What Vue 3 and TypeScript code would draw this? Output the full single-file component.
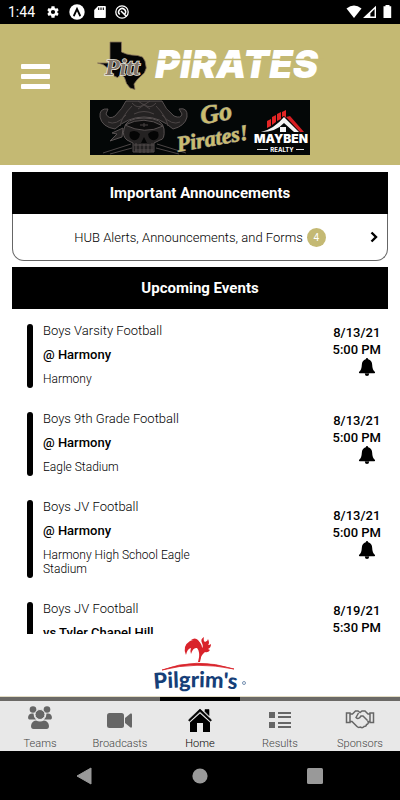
<script setup lang="ts">
import { ref } from 'vue'

interface GameEvent {
  id: number
  team: string
  opponent: string
  place: string
  date: string
  time: string
}

const events: GameEvent[] = [
  { id: 1, team: 'Boys Varsity Football', opponent: '@ Harmony', place: 'Harmony', date: '8/13/21', time: '5:00 PM' },
  { id: 2, team: 'Boys 9th Grade Football', opponent: '@ Harmony', place: 'Eagle Stadium', date: '8/13/21', time: '5:00 PM' },
  { id: 3, team: 'Boys JV Football', opponent: '@ Harmony', place: 'Harmony High School Eagle Stadium', date: '8/13/21', time: '5:00 PM' },
  { id: 4, team: 'Boys JV Football', opponent: 'vs Tyler Chapel Hill', place: '', date: '8/19/21', time: '5:30 PM' },
]

const tabs = ['Teams', 'Broadcasts', 'Home', 'Results', 'Sponsors']
const active = ref('Home')
const alertCount = ref(4)
</script>

<template>
  <div class="app">
    <div class="status">
      <span class="clock">1:44</span>
      <svg class="status-icon" width="14" height="14" viewBox="0 0 24 24" aria-hidden="true">
        <path fill="#fff" d="M19.4 13a7.500 7.500 0 0 0 0-2l2.300-1.800-2.200-4-2.700 1.100a8 8 0 0 0-1.800-1L14.600 2.300H9.400L9 5.300a8 8 0 0 0-1.800 1L4.500 5.200l-2.200 4L4.600 11a7.500 7.500 0 0 0 0 2l-2.300 1.800 2.200 4 2.700-1.100a8 8 0 0 0 1.800 1l.4 3h5.200l.4-3a8 8 0 0 0 1.800-1l2.700 1.100 2.200-4zM12 15.600a3.600 3.600 0 1 1 0-7.200 3.600 3.600 0 0 1 0 7.200z" />
      </svg>
      <svg class="status-icon" width="16" height="16" viewBox="0 0 16 16" aria-hidden="true">
        <circle cx="8" cy="8" r="7.700" fill="#fff" />
        <path d="M5 11.500 8 5l3 6.500" fill="none" stroke="#000" stroke-width="1.800" stroke-linecap="round" />
      </svg>
      <svg class="status-icon" width="12" height="14" viewBox="0 0 12 14" aria-hidden="true">
        <path d="M4 1h7q.8 0 .8.8v10.400q0 .8-.8.8H1q-.8 0-.8-.8V5z" fill="#fff" />
        <path d="M4.700 2.500v2.500M7 2.500v2.500M9.300 2.500v2.500" stroke="#000" stroke-width="1.100" />
      </svg>
      <svg class="status-icon" width="14" height="14" viewBox="0 0 14 14" aria-hidden="true">
        <circle cx="7" cy="7" r="6.200" fill="none" stroke="#fff" stroke-width="1.300" />
        <path d="M4.800 9.500a3.400 3.400 0 1 1 4.900-.3M6 6l5.500 5.500" fill="none" stroke="#fff" stroke-width="1.500" />
      </svg>
      <svg class="signals" width="46" height="14" viewBox="0 0 46 14" aria-hidden="true">
        <path d="M.5 3.500Q8-2.300 15.500 3.500L8 13z" fill="#fff" />
        <path fill-rule="evenodd" d="M30 .7V13H17zM28.600 4v7.600h-4.200V8.300z" fill="#fff" />
        <path d="M39.500 0h4v1.300h1.700V13h-7.700V1.300h2z" fill="#fff" />
      </svg>
    </div>

    <header class="header">
      <button class="menu" type="button" aria-label="Menu">
        <span></span><span></span><span></span>
      </button>
      <div class="brand">
        <div class="logo-row">
          <svg width="50" height="50" viewBox="0 0 50 50" role="img" aria-label="Pitt">
            <path d="M13 1h11.500v10l5 2 5 1 6 .5 5 1.500 2.500 4 1.300 7-2 5-7 6.500-3.300 4.500 1 5.500-5-1.500-3.500-4.500-2-6-3.500-3-3.500 3-3.500-1.500-3-5.500-8-6L.5 22H13z" fill="#050505" stroke="#87725c" stroke-width=".8" />
            <text x="8" y="34" class="pitt">Pitt</text>
          </svg>
          <svg width="170" height="34" viewBox="0 0 170 34" role="img" aria-label="Pirates">
            <text x="1" y="29" class="pirates">PIRATES</text>
            <path d="M0 10.500h170" stroke="#c4b973" stroke-width="1.400" />
          </svg>
        </div>
        <svg class="banner" width="220" height="55" viewBox="0 0 220 55" role="img" aria-label="Go Pirates! Mayben Realty">
          <rect width="220" height="55" fill="#040707" />
          <g fill="#242222" stroke="#575151" stroke-width="1">
            <path d="M25 29Q12 27 10 17q-1-9 8-8l-2 5q3 6 9 2Q33 8 36 1h36q3 8 12 15 7 3 8-2l-3-5q9-2 8 8-2 9-14 12Q70 17 54 17T25 29z" />
            <path d="M34 29Q35 18 54 18t20 11-4 11l-6 3v9H43v-9l-6-3q-5-4-3-11z" />
            <path d="M35 25q19-10 38 1-18 9-38-1z" fill="#0c0c0c" />
            <path d="M33 28l-11 5 5 1-7 7 12-4z" />
          </g>
          <path d="M40 32q6-3 10 2-1 7-7 6-5-2-3-8zm28 0q-6-3-10 2 1 7 7 6 5-2 3-8zM54 37l-3 6h6z" fill="#040505" />
          <path d="M44 45h20M46 43v9M50 44v9M54 44v9M58 44v9M62 43v9M45 50h18" stroke="#514b4b" stroke-width="1" />
          <path d="M42 3q6 7 12 1 6 6 12-1M48 9l12-8M48 1l12 8M44 14q10-5 20 0M13 53l28-9M67 44l29 9M20 54l22-6M66 48l23 6M50 25h8M54 23v4M30 26q2-10 12-20M78 26Q76 16 66 6M18 22q8 4 18-7M90 22q-8 4-18-7" fill="none" stroke="#4b4545" stroke-width="1" />
          <g transform="rotate(-10 125 25)" class="script">
            <text x="112" y="22" class="go">Go</text>
            <text x="84" y="45" class="team">Pirates!</text>
          </g>
          <path d="M177 28v-7l4-2v7zm5-3V17l4-2v7zm5-4v-7l4-2v7zm5-4v-5l4-2v8l-2-2z" fill="#e42525" />
          <path d="M171 32Q184 29 194 17l15 15h-5l-10-9q-8 9-23 9z" fill="#f4f4f4" />
          <path d="m196 17 4-1 14 16h-4z" fill="#d51d22" />
          <path d="M190 27h6v5h-6z" fill="#f4f4f4" />
          <text x="191" y="43" class="mayben">MAYBEN</text>
          <text x="192" y="52" class="realty">REALTY</text>
          <path d="M167 49.500h11M206 49.500h8" stroke="#ddd" stroke-width="1" />
        </svg>
      </div>
    </header>

    <main class="content">
      <section class="announcements">
        <h2 class="heading">Important Announcements</h2>
        <a class="alert-row" href="#alerts">
          <span>HUB Alerts, Announcements, and Forms</span>
          <span class="badge">{{ alertCount }}</span>
          <svg class="chevron" width="8" height="12" viewBox="0 0 8 12" aria-hidden="true">
            <path d="m1.500 1.500 4.500 4.500-4.500 4.500" fill="none" stroke="#000" stroke-width="2.400" />
          </svg>
        </a>
      </section>

      <section>
        <h2 class="heading">Upcoming Events</h2>
        <ul class="events">
          <li v-for="event in events" :key="event.id" class="event">
            <span class="bar"></span>
            <div class="details">
              <p class="name">{{ event.team }}</p>
              <p class="opponent">{{ event.opponent }}</p>
              <p class="place">{{ event.place }}</p>
            </div>
            <div class="when">
              <span>{{ event.date }}</span>
              <span>{{ event.time }}</span>
              <button class="bell" type="button" aria-label="Notify me">
                <svg width="18" height="18" viewBox="0 0 18 18" aria-hidden="true">
                  <path d="M9 0q1 0 1.200 1.300Q14 2.200 14.200 7q.1 5 2.800 7 .5 1.200-.9 1.200H1.900Q.5 15.200 1 14 3.700 12 3.800 7q.2-4.800 4-5.700Q8 0 9 0zM6.800 15.500h4.400Q11 18 9 18t-2.200-2.500z" />
                </svg>
              </button>
            </div>
          </li>
        </ul>
      </section>
    </main>

    <a class="sponsor" href="#sponsor" aria-label="Pilgrim's">
      <svg width="100" height="60" viewBox="0 0 100 60" aria-hidden="true">
        <g fill="#d9232b">
          <path d="M48 26q3-10-1-14-4-1-6 6-1-4 0-6-4 1-5 7-4-9 4-14 4-2 8 0 5 3 4 10-1 7-2 11z" />
          <path d="M41 4q4-3 7 0 3 3 3 9 3-2 1-6-2-4 2-6-1 4 1 5 3-1 3-3 2 4 0 6 2 0 3-1 0 4-3 5l2 1q-2 3-5 2-4 3-5 8-1-14-3-17-2-3-6-3z" />
        </g>
        <path d="M12 34Q46 21 84 33 46 25 12 34z" fill="#d9232b" stroke="#d9232b" stroke-width=".8" />
        <path id="name-arc" d="M4 53Q46 49 96 54" fill="none" />
        <text class="pilgrims"><textPath href="#name-arc">Pilgrim's</textPath></text>
        <circle cx="94" cy="47" r="1.500" fill="none" stroke="#57779f" stroke-width=".8" />
      </svg>
    </a>

    <nav class="tabs">
      <button
        v-for="tab in tabs"
        :key="tab"
        type="button"
        class="tab"
        :class="{ active: active === tab }"
        @click="active = tab"
      >
        <svg v-if="tab === 'Teams'" width="30" height="26" viewBox="0 0 30 26" aria-hidden="true">
          <circle cx="8" cy="4.500" r="3.300" /><circle cx="22" cy="4.500" r="3.300" />
          <circle cx="15" cy="9.500" r="5" stroke="#e8e8e8" />
          <path d="M7 8.500h1.500q0 4 2.500 6H4q-1.500-1-.8-3Q4 8.500 7 8.500zM23 8.500h-1.500q0 4-2.500 6h7q1.500-1 .8-3Q26 8.500 23 8.500zM11 15.500q4 2 8 0 4.500.5 5 5.500 0 3-2.500 3h-13Q6 24 6 21q.5-5 5-5.500z" />
        </svg>
        <svg v-else-if="tab === 'Broadcasts'" width="30" height="26" viewBox="0 0 30 26" aria-hidden="true">
          <rect x="2" y="8" width="17" height="15" rx="2.500" />
          <path d="m20 13 5.500-4.500q1.500-.5 1.500 1v12q0 1.500-1.500 1L20 18z" />
        </svg>
        <svg v-else-if="tab === 'Home'" width="30" height="26" viewBox="0 0 30 26" aria-hidden="true">
          <path d="M15 4 26.500 15l-1 1.200L15 6.600 4.500 16.200l-1-1.200zM20 4.500h4v6l-4-4z" stroke="#000" stroke-width=".6" />
          <path d="M15 8.500 25 17.500V27h-7v-9h-6v9H5v-9.500z" />
        </svg>
        <svg v-else-if="tab === 'Results'" width="30" height="26" viewBox="0 0 30 26" aria-hidden="true">
          <path d="M4 7h6v6H4zM4 17h6v6H4zM13 7h13v2H13zM13 11h13v2H13zM13 17h13v2H13zM13 21h13v2H13z" />
        </svg>
        <svg v-else class="outline" width="30" height="26" viewBox="0 0 30 26" aria-hidden="true">
          <path d="M1.500 8H5v9.500H1.500zM28.500 8H25v9.500h3.500zM5 9h2.500l3-3H13l2 1.500L17 6h3l3 3h2M13.500 8 11 12.500q2.500 2.500 5-1.500h2l4.500 4.500M5 16.500h2l5 5q1.500 1.500 3 .5 3 1.500 4-.5 2.500 0 2.500-2 2.500-.5 1.500-3H25" />
        </svg>
        <span>{{ tab }}</span>
      </button>
    </nav>

    <div class="system-nav">
      <button type="button" aria-label="Back">
        <svg width="16" height="18" viewBox="0 0 16 18"><path d="M15 1v16L1 9z" stroke="#999" stroke-linejoin="round" /></svg>
      </button>
      <button type="button" aria-label="Home screen">
        <svg width="16" height="16" viewBox="0 0 16 16"><circle cx="8" cy="8" r="7.600" /></svg>
      </button>
      <button type="button" aria-label="Recent apps">
        <svg width="16" height="16" viewBox="0 0 16 16"><rect width="16" height="16" rx="1.500" /></svg>
      </button>
    </div>
  </div>
</template>

<style>
body {
  margin: 0;
  background: #fff;
}
</style>

<style scoped>
.app {
  display: flex;
  flex-direction: column;
  height: 100vh;
  font-family: Roboto, sans-serif;
  color: #000;
  background: #fff;
}

svg {
  display: block;
  flex: none;
  overflow: visible;
}

button {
  border: 0;
  padding: 0;
  background: none;
  font: inherit;
  color: inherit;
}

a {
  color: inherit;
  text-decoration: none;
}

.status {
  display: flex;
  flex: none;
  align-items: center;
  gap: 9px;
  height: 24px;
  padding: 0 8px;
  background: #000;
  color: #fff;
}

.clock {
  margin-right: 2px;
  font-size: 14px;
  line-height: 24px;
}

.signals {
  margin-left: auto;
}

.header {
  display: grid;
  grid-template-columns: 1fr 240px 1fr;
  flex: none;
  padding: 17px 0 10px;
  background: #c4b973;
}

.menu {
  display: flex;
  flex-direction: column;
  align-self: start;
  gap: 5px;
  width: 29px;
  margin: 23px 0 0 21px;
}

.menu span {
  height: 5px;
  border-radius: 1px;
  background: #fff;
}

.brand {
  display: flex;
  flex-direction: column;
  gap: 9px;
}

.logo-row {
  display: flex;
  align-items: center;
  gap: 7px;
  padding-left: 17px;
}

.banner {
  align-self: center;
}

.pitt {
  font: italic bold 24px "Liberation Serif", serif;
  fill: #7f746a;
  stroke: #e8e4dc;
  stroke-width: 1.5px;
  paint-order: stroke;
}

.pirates {
  font: italic 900 38px Inter, sans-serif;
  fill: #fff;
}

.script {
  font: italic bold 24px "Liberation Serif", serif;
  fill: #cbbd6c;
  stroke: #8b8985;
  stroke-width: 1px;
  paint-order: stroke;
}

.go {
  font-size: 26px;
}

.team {
  font-size: 22px;
}

.mayben {
  font: 900 12px Inter, sans-serif;
  fill: #fff;
  text-anchor: middle;
}

.realty {
  font: bold 6px Inter, sans-serif;
  fill: #fff;
  text-anchor: middle;
}

.content {
  flex: 1;
  min-height: 0;
  padding: 7px 12px 0;
  overflow: hidden;
}

.heading {
  margin: 0;
  background: #000;
  color: #fff;
  font-size: 15px;
  font-weight: 700;
  line-height: 42px;
  text-align: center;
}

.announcements {
  margin-bottom: 6px;
}

.alert-row {
  position: relative;
  display: flex;
  align-items: center;
  justify-content: center;
  gap: 4px;
  height: 46px;
  border: 1px solid #666;
  border-top: 0;
  border-radius: 0 0 12px 12px;
  font-size: 13px;
  font-weight: 300;
}

.badge {
  width: 19px;
  border-radius: 50%;
  background: #c4b973;
  color: #fff;
  font-size: 10px;
  font-weight: 400;
  line-height: 19px;
  text-align: center;
}

.chevron {
  position: absolute;
  right: 9px;
}

.events {
  margin: 0;
  padding: 3px 7px 0 15px;
  list-style: none;
}

.event {
  display: flex;
  padding: 12px 0;
}

.bar {
  flex: none;
  width: 6px;
  border-radius: 3px;
  background: #000;
}

.details {
  flex: 1;
  padding-left: 10px;
}

.details p {
  margin: 0;
}

.name {
  font-size: 13px;
  font-weight: 300;
  line-height: 14px;
}

.details .opponent {
  margin: 10px 0;
  font-size: 13px;
  font-weight: 500;
  line-height: 14px;
}

.place {
  min-height: 14px;
  max-width: 160px;
  padding-bottom: 2px;
  font-size: 12px;
  font-weight: 300;
  line-height: 14px;
}

.when {
  display: flex;
  flex-direction: column;
  align-items: center;
  align-self: center;
  margin-bottom: 12px;
  font-size: 13px;
  font-weight: 500;
  line-height: 17px;
}

.bell {
  align-self: flex-end;
  margin-right: 5px;
}

.sponsor {
  display: flex;
  flex: none;
  justify-content: center;
  padding-top: 2px;
  border-bottom: 1px solid #e2dcc4;
}

.pilgrims {
  font: 900 22px Lato, sans-serif;
  fill: #163f78;
}

.tabs {
  display: grid;
  grid-template-columns: repeat(5, 1fr);
  flex: none;
  background: #e8e8e8;
}

.tab {
  display: flex;
  flex-direction: column;
  align-items: center;
  gap: 7px;
  height: 54px;
  border-top: 4px solid #6b6966;
  padding-top: 4px;
  color: #444;
  fill: #666;
  font-size: 11px;
  font-weight: 300;
  line-height: 12px;
}

.tab.active {
  border-top-color: #000;
  color: #000;
  fill: #000;
}

.outline {
  fill: none;
  stroke: #666;
  stroke-width: 1.5px;
}

.system-nav {
  display: flex;
  flex: none;
  align-items: center;
  justify-content: space-between;
  height: 49px;
  padding: 0 77px 0 76px;
  background: #000;
  fill: #999;
}
</style>
